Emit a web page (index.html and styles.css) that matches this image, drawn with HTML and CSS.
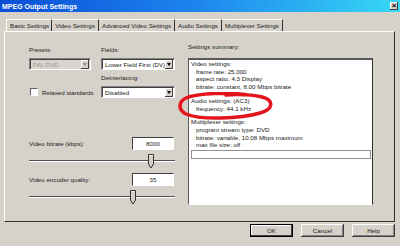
FILE: index.html
```html
<!DOCTYPE html>
<html lang="en">
<head>
  <meta charset="UTF-8" />
  <title>MPEG Output Settings</title>
  <link rel="stylesheet" href="styles.css">
</head>
<body>
  <div class="window">
    <div class="titlebar">
      <span class="title">MPEG Output Settings</span>
      <span class="close">×</span>
    </div>

    <!-- Onglets -->
    <div class="tabs">
      <div class="tab active">Basic Settings</div>
      <div class="tab">Video Settings</div>
      <div class="tab">Advanced Video Settings</div>
      <div class="tab">Audio Settings</div>
      <div class="tab">Multiplexer Settings</div>
    </div>

    <div class="panel">
      <div class="left">
        <div class="options">
          <div class="label">Presets:</div>
          <div class="label">Fields:</div>
          <div class="select disabled"><span>PAL DVD</span><i class="arrow"></i></div>
          <div class="select"><span>Lower Field First (DV)</span><i class="arrow"></i></div>
          <div></div>
          <div class="label">Deinterlacing:</div>
          <div class="check"><span class="box"></span>Relaxed standards</div>
          <div class="select"><span>Disabled</span><i class="arrow"></i></div>
        </div>

        <div class="value-row first">
          <span>Video bitrate (kbps):</span>
          <span class="edit">8000</span>
        </div>
        <div class="slider">
          <div class="track"></div>
          <svg class="thumb" style="left: 119px" width="7" height="15" viewBox="0 0 7 15">
            <path d="M0.5 0.5 H5.5 V10 L3 14 L0.5 10 Z" fill="#d6d2ca" stroke="#303030" stroke-width="1"/>
            <path d="M1.5 1.5 H4.5" stroke="#fff" stroke-width="1"/>
          </svg>
        </div>

        <div class="value-row">
          <span>Video encoder quality:</span>
          <span class="edit">35</span>
        </div>
        <div class="slider">
          <div class="track"></div>
          <svg class="thumb" style="left: 101px" width="7" height="15" viewBox="0 0 7 15">
            <path d="M0.5 0.5 H5.5 V10 L3 14 L0.5 10 Z" fill="#d6d2ca" stroke="#303030" stroke-width="1"/>
            <path d="M1.5 1.5 H4.5" stroke="#fff" stroke-width="1"/>
          </svg>
        </div>
      </div>

      <div class="summary">
        <div class="label">Settings summary:</div>
        <div class="summary-box">
          <div class="section">
            <div>Video settings:</div>
            <div class="indent">frame rate: 25.000</div>
            <div class="indent">aspect ratio: 4:3 Display</div>
            <div class="indent">bitrate: constant, 8.00 Mbps bitrate</div>
          </div>
          <div class="section">
            <div>Audio settings: (AC3)</div>
            <div class="indent">frequency: 44.1 kHz</div>
          </div>
          <div class="section">
            <div>Multiplexer settings:</div>
            <div class="indent">program stream type: DVD</div>
            <div class="indent">bitrate: variable, 10.08 Mbps maximum</div>
            <div class="indent">max file size: off</div>
          </div>
          <div class="row-focus"></div>
        </div>
      </div>
    </div>

    <div class="buttons">
      <button class="default">OK</button>
      <button>Cancel</button>
      <button>Help</button>
    </div>

    <!-- cercle rouge dessiné à la main -->
    <svg class="marker" width="100" height="32" viewBox="0 0 100 32">
      <path d="M70 3 C52 0 20 1 8 6 C0 10 0 18 8 22 C22 28 62 27 82 21 C96 17 96 8 84 5 C76 3 60 2 48 3"
            fill="none" stroke="#e3141c" stroke-width="3.5" stroke-linecap="round"/>
    </svg>
  </div>
</body>
</html>
```

FILE: styles.css
```css
html, body {
  margin: 0;
  padding: 0;
  background: #d6d2ca;
  font-family: 'Liberation Sans', Arial, sans-serif;
  font-size: 6.2px;
  color: #202020;
}
.window {
  width: 400px;
  height: 246px;
  position: relative;
  overflow: hidden;
  background: #d6d2ca;
}
.titlebar {
  height: 12px;
  display: flex;
  align-items: center;
  justify-content: space-between;
  padding: 0 2px;
  background: linear-gradient(to right, #0a4ed6, #1d86ee 50%, #38d8f6);
}
.title {
  color: #fff;
  font-weight: bold;
  font-size: 7px;
}
.close {
  width: 8px;
  height: 8px;
  line-height: 8px;
  text-align: center;
  background: #d6d2ca;
  color: #000;
  font-size: 8px;
  font-weight: bold;
  box-shadow: inset -1px -1px #404040, inset 1px 1px #fff;
}
.tabs {
  display: flex;
  margin-top: 7px;
  padding-left: 6px;
  height: 12px;
}
.tab {
  display: flex;
  align-items: center;
  padding: 0 3px 0 3px;
  border-right: 1px solid #303030;
  border-top: 1px solid #fff;
  line-height: 10px;
  white-space: nowrap;
}
.tab.active {
  border-left: 1px solid #fff;
  padding: 0 2px 0 3px;
}
.panel {
  margin-left: 4px;
  width: 391px;
  height: 191px;
  box-sizing: border-box;
  border-top: 1px solid #fff;
  border-left: 1px solid #fff;
  border-right: 1px solid #303030;
  border-bottom: 1px solid #303030;
  padding: 14px 0 0 24px;
  display: flex;
  gap: 13px;
}
.left {
  width: 146px;
}
.label {
  height: 8px;
  line-height: 8px;
  margin-bottom: 4px;
  white-space: nowrap;
}
.options {
  display: grid;
  grid-template-columns: 62px 74px;
  column-gap: 10px;
}
.options .select {
  margin-bottom: 4px;
}
.select {
  height: 12px;
  box-sizing: border-box;
  background: #fff;
  border-top: 1px solid #808080;
  border-left: 1px solid #808080;
  border-right: 1px solid #fff;
  border-bottom: 1px solid #fff;
  box-shadow: inset 1px 1px #404040;
  display: flex;
  align-items: center;
  justify-content: space-between;
  padding-left: 3px;
  white-space: nowrap;
  overflow: hidden;
}
.select.disabled {
  background: #d8d5ce;
  color: #9a978f;
}
.arrow {
  width: 8px;
  height: 9px;
  margin-right: 1px;
  flex-shrink: 0;
  background: #d6d2ca;
  box-shadow: inset -1px -1px #404040, inset 1px 1px #fff;
  position: relative;
}
.arrow::after {
  content: '';
  position: absolute;
  left: 2px;
  top: 3px;
  border-left: 2px solid transparent;
  border-right: 2px solid transparent;
  border-top: 3px solid #000;
}
.disabled .arrow::after {
  border-top-color: #908d86;
}
.check {
  display: flex;
  align-items: center;
  gap: 4px;
  padding-left: 1px;
  height: 12px;
  white-space: nowrap;
}
.box {
  width: 6px;
  height: 6px;
  flex-shrink: 0;
  background: #fff;
  border-top: 1px solid #606060;
  border-left: 1px solid #606060;
  border-right: 1px solid #fff;
  border-bottom: 1px solid #fff;
}
.value-row {
  display: flex;
  align-items: center;
  justify-content: space-between;
  height: 13px;
  margin-top: 3px;
}
.value-row.first {
  margin-top: 35px;
}
.edit {
  width: 42px;
  height: 13px;
  box-sizing: border-box;
  margin-right: 1px;
  background: #fff;
  border-top: 1px solid #404040;
  border-left: 1px solid #404040;
  border-right: 1px solid #fff;
  border-bottom: 1px solid #fff;
  text-align: center;
  line-height: 11px;
}
.slider {
  position: relative;
  height: 16px;
  margin-top: 4px;
}
.track {
  position: absolute;
  left: 0;
  right: 0;
  top: 6px;
  height: 1px;
  background: #505050;
  border-bottom: 1px solid #fff;
}
.thumb {
  position: absolute;
  top: 0;
}
.summary {
  width: 185px;
}
.summary > .label {
  margin-top: -3px;
  margin-bottom: 7px;
}
.summary-box {
  height: 147px;
  box-sizing: border-box;
  background: #fff;
  border-top: 2px solid #5a5a5a;
  border-left: 1px solid #5a5a5a;
  border-right: 1px solid #303030;
  border-bottom: 1px solid #fff;
  padding: 0 0 0 2px;
  line-height: 7.7px;
  white-space: nowrap;
}
.section + .section {
  margin-top: 6px;
}
.indent {
  padding-left: 5px;
}
.row-focus {
  height: 7px;
  margin: 1px 1px 0 0;
  border: 1px solid #909090;
}
.buttons {
  display: flex;
  justify-content: flex-end;
  gap: 8px;
  padding: 2px 5px 0 0;
}
button {
  width: 43px;
  height: 13px;
  padding: 0;
  border: none;
  background: #d6d2ca;
  font-family: 'Liberation Sans', Arial, sans-serif;
  font-size: 6.2px;
  color: #202020;
  box-shadow: inset -1px -1px #404040, inset 1px 1px #fff, inset -2px -2px #808080;
}
button.default {
  box-shadow: inset 0 0 0 1px #000, inset -2px -2px #404040, inset 2px 2px #fff;
}
.marker {
  position: absolute;
  left: 178px;
  top: 92px;
}
```
